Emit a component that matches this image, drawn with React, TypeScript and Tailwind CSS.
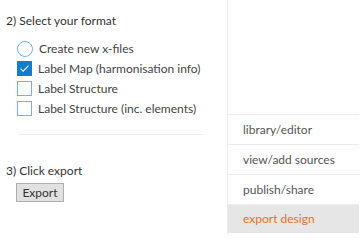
import React from "react";

const font = { fontFamily: 'Lato, "Open Sans", sans-serif' };

function Check({ checked }: { checked: boolean }) {
  return (
    <svg width="15" height="15" viewBox="0 0 15 15" className="shrink-0">
      {checked ? (
        <>
          <rect x="0" y="0" width="15" height="15" fill="#0f7dd0" />
          <path d="M3.5 7.6 L6.2 10.2 L11.5 4.6" stroke="white" strokeWidth="1.2" fill="none" />
        </>
      ) : (
        <rect x="0.5" y="0.5" width="14" height="14" fill="white" stroke="#6cb6ee" />
      )}
    </svg>
  );
}

export default function App() {
  const options = [
    { label: "Label Map (harmonisation info)", checked: true },
    { label: "Label Structure", checked: false },
    { label: "Label Structure (inc. elements)", checked: false },
  ];
  const menu = ["library/editor", "view/add sources", "publish/share"];

  return (
    <div className="flex h-[235px] w-[360px] bg-white text-[12px] text-[#333]" style={font}>
      <div className="w-[227px] shrink-0 pl-[6px] pt-[13px]">
        <div className="leading-[16px]">2) Select your format</div>
        <div className="mt-[12px] flex flex-col gap-[5px] pl-[11px]">
          <div className="flex h-[15px] items-center gap-[6px]">
            <svg width="16" height="16" viewBox="0 0 16 16" className="shrink-0">
              <circle cx="8" cy="8" r="7.5" fill="white" stroke="#6cb6ee" />
            </svg>
            <span className="text-[#444]">Create new x-files</span>
          </div>
          {options.map((o) => (
            <div key={o.label} className="flex h-[15px] items-center gap-[6px]">
              <Check checked={o.checked} />
              <span className="text-[#444]">{o.label}</span>
            </div>
          ))}
        </div>
        <div className="ml-[13px] mt-[18px] h-px w-[184px] bg-[#ececec]" />
        <div className="mt-[28px] leading-[16px]">3) Click export</div>
        <button className="ml-[10px] mt-[4px] h-[19px] w-[48px] border border-[#adadad] bg-[#e1e1e1] text-[12px] leading-[17px] text-[#333]">
          Export
        </button>
      </div>
      <div className="flex w-[132px] flex-col border-l border-[#ececec]">
        <div className="h-[115px] border-b border-[#ececec]" />
        {menu.map((m) => (
          <div key={m} className="flex h-[30px] items-center border-b border-[#ececec] pl-[15px] text-[#555]">
            {m}
          </div>
        ))}
        <div className="flex h-[28px] items-center bg-[#e6e6e6] pl-[15px] text-[#e8711c]">export design</div>
      </div>
    </div>
  );
}
